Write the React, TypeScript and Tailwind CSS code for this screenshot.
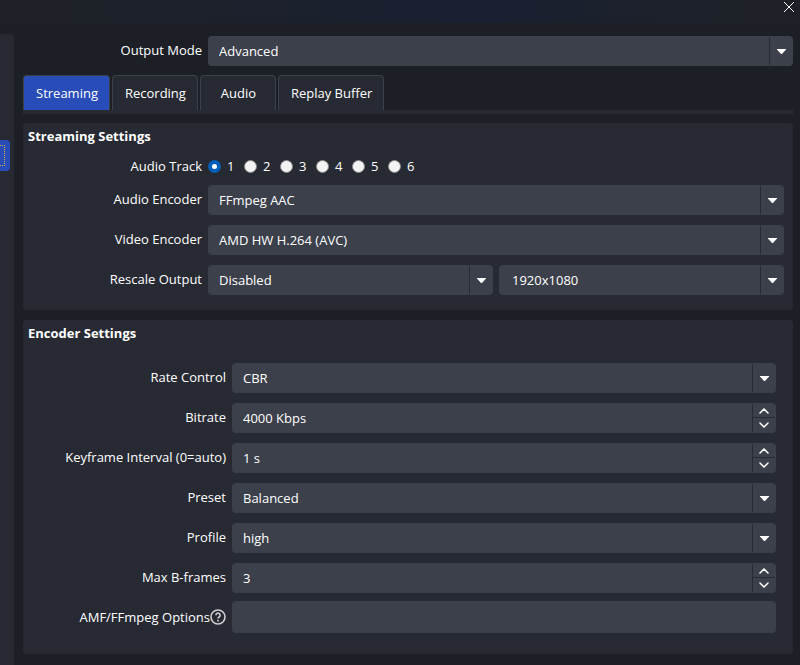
import { useState, type ReactNode } from "react";

const tabs = ["Streaming", "Recording", "Audio", "Replay Buffer"];
const tracks = ["1", "2", "3", "4", "5", "6"];

function SelectField({
  id,
  label,
  options,
  className = "pl-[11px]",
}: {
  id: string;
  label?: string;
  options: string[];
  className?: string;
}) {
  return (
    <div className="relative min-w-0 flex-1">
      <select
        id={id}
        aria-label={label}
        className={`block h-[30px] w-full appearance-none rounded bg-[#3c404b] pr-7 outline-none ${className}`}
      >
        {options.map((option) => (
          <option key={option}>{option}</option>
        ))}
      </select>
      <span className="pointer-events-none absolute inset-y-px right-0 flex w-6 items-center justify-center border-l border-[#272a33]">
        <svg width="9" height="5" viewBox="0 0 9 5" fill="#fff">
          <path d="M0 0h9v.6L5 5H4L0 .6z" />
        </svg>
      </span>
    </div>
  );
}

function SpinField({ id, value }: { id: string; value: string }) {
  return (
    <div className="flex h-[30px] min-w-0 flex-1 rounded bg-[#3c404b] py-px">
      <input
        id={id}
        type="text"
        defaultValue={value}
        className="min-w-0 flex-1 bg-transparent pl-[11px] outline-none"
      />
      <div className="mr-px flex w-[23px] flex-col border-l border-[#272a33]">
        <button
          type="button"
          aria-label="Increase"
          className="flex h-3.5 items-center justify-center border-b border-[#272a33]"
        >
          <Chevron d="M1 5 5 1l4 4" />
        </button>
        <button
          type="button"
          aria-label="Decrease"
          className="flex h-3.5 items-center justify-center"
        >
          <Chevron d="m1 1 4 4 4-4" />
        </button>
      </div>
    </div>
  );
}

function Chevron({ d }: { d: string }) {
  return (
    <svg width="10" height="6" viewBox="0 0 10 6" fill="none">
      <path d={d} stroke="#fff" strokeWidth="1.5" strokeLinecap="round" />
    </svg>
  );
}

function Row({
  id,
  label,
  wide,
  help,
  children,
}: {
  id: string;
  label: string;
  wide?: boolean;
  help?: boolean;
  children: ReactNode;
}) {
  return (
    <div className="flex items-center gap-1.5">
      <div
        className={`flex shrink-0 items-center justify-end whitespace-nowrap ${help ? "pb-px" : "pb-0.5"} ${wide ? "w-[203px]" : "w-[179px]"}`}
      >
        <label htmlFor={id}>{label}</label>
        {help && (
          <svg
            width="16"
            height="16"
            viewBox="0 0 16 16"
            fill="none"
            stroke="#cfd0d3"
            strokeWidth="1.6"
          >
            <circle cx="8" cy="8" r="7" />
            <path d="M5.900 6.200a2.100 2.100 0 1 1 3.200 1.800C8.300 8.500 8 8.800 8 9.600" />
            <path d="M8 10.800v1.600" />
          </svg>
        )}
      </div>
      {children}
    </div>
  );
}

export default function App() {
  const [tab, setTab] = useState("Streaming");
  const [track, setTrack] = useState("1");

  return (
    <div className="flex min-h-screen flex-col bg-[#1d1f26] font-['Open_Sans','Noto_Sans',sans-serif] text-[13px] leading-4 text-white">
      <header className="flex h-[23px] justify-end bg-linear-to-r from-[#1e2127] from-5% via-[#1a2032] via-60% to-[#1e2127] to-95%">
        <button
          type="button"
          aria-label="Close"
          className="flex h-3.5 w-[23px] items-center justify-center"
        >
          <svg width="10" height="10" viewBox="0 0 10 10" stroke="#fff">
            <path d="m0 0 10 10M10 0 0 10" />
          </svg>
        </button>
      </header>

      <div className="flex flex-1 gap-[9px]">
        <nav className="mt-[11px] w-3.5 shrink-0 rounded-tr bg-[#272a33] pt-[106px]">
          <button
            type="button"
            aria-label="Output"
            className="block h-[31px] w-2.5 rounded-r bg-[#284cb8] py-[5px] pr-[5px]"
          >
            <span className="block h-full border border-l-0 border-dotted border-[#d7b347]" />
          </button>
        </nav>

        <main className="mt-[13px] mr-[7px] min-w-0 flex-1">
          <Row id="mode" label="Output Mode">
            <SelectField id="mode" options={["Advanced", "Simple"]} />
          </Row>

          <div
            role="tablist"
            className="mt-[9px] flex gap-0.5 border-b-4 border-[#272a33]"
          >
            {tabs.map((name) => (
              <button
                key={name}
                type="button"
                role="tab"
                aria-selected={tab === name}
                onClick={() => setTab(name)}
                className={`h-[35px] min-w-[76px] rounded-t border border-b-0 border-[#3c404b] pr-[11px] pl-3 ${tab === name ? "bg-[#284cb8]" : "bg-[#272a33]"}`}
              >
                {name}
              </button>
            ))}
          </div>

          <section className="mt-[9px] rounded bg-[#272a33] pt-[5px] pr-[9px] pb-[15px]">
            <h2 className="pl-[5px] font-bold">Streaming Settings</h2>
            <div
              role="radiogroup"
              aria-labelledby="track-label"
              className="mt-3.5 flex h-4 items-center gap-1.5"
            >
              <span id="track-label" className="w-[179px] text-right">
                Audio Track
              </span>
              <div className="flex">
                {tracks.map((n) => (
                  <label key={n} className="flex w-9 items-center gap-1.5">
                    <input
                      type="radio"
                      name="track"
                      value={n}
                      checked={track === n}
                      onChange={() => setTrack(n)}
                      className="size-[13px] appearance-none rounded-full border border-[#8a8a8a] bg-[#f3f3f3] checked:border-4 checked:border-[#005fb8] checked:bg-white"
                    />
                    {n}
                  </label>
                ))}
              </div>
            </div>
            <div className="mt-[11px] space-y-2.5">
              <Row id="audio-encoder" label="Audio Encoder">
                <SelectField id="audio-encoder" options={["FFmpeg AAC"]} />
              </Row>
              <Row id="video-encoder" label="Video Encoder">
                <SelectField
                  id="video-encoder"
                  options={["AMD HW H.264 (AVC)"]}
                />
              </Row>
              <Row id="rescale" label="Rescale Output">
                <SelectField id="rescale" options={["Disabled"]} />
                <SelectField
                  id="resolution"
                  label="Rescale resolution"
                  options={["1920x1080"]}
                  className="pl-[13px]"
                />
              </Row>
            </div>
          </section>

          <section className="mt-2.5 mb-[11px] rounded bg-[#272a33] pt-[5px] pr-[17px] pb-[21px]">
            <h2 className="pl-[5px] font-bold">Encoder Settings</h2>
            <div className="mt-[22px] space-y-2.5">
              <Row wide id="rate-control" label="Rate Control">
                <SelectField id="rate-control" options={["CBR"]} />
              </Row>
              <Row wide id="bitrate" label="Bitrate">
                <SpinField id="bitrate" value="4000 Kbps" />
              </Row>
              <Row wide id="keyframe" label="Keyframe Interval (0=auto)">
                <SpinField id="keyframe" value="1 s" />
              </Row>
              <Row wide id="preset" label="Preset">
                <SelectField id="preset" options={["Balanced"]} />
              </Row>
              <Row wide id="profile" label="Profile">
                <SelectField id="profile" options={["high"]} />
              </Row>
              <Row wide id="b-frames" label="Max B-frames">
                <SpinField id="b-frames" value="3" />
              </Row>
            </div>
            <div className="mt-2">
              <Row wide help id="options" label="AMF/FFmpeg Options">
                <input
                  id="options"
                  type="text"
                  className="h-8 min-w-0 flex-1 rounded bg-[#3c404b] px-[11px] outline-none"
                />
              </Row>
            </div>
          </section>
        </main>
      </div>
    </div>
  );
}
